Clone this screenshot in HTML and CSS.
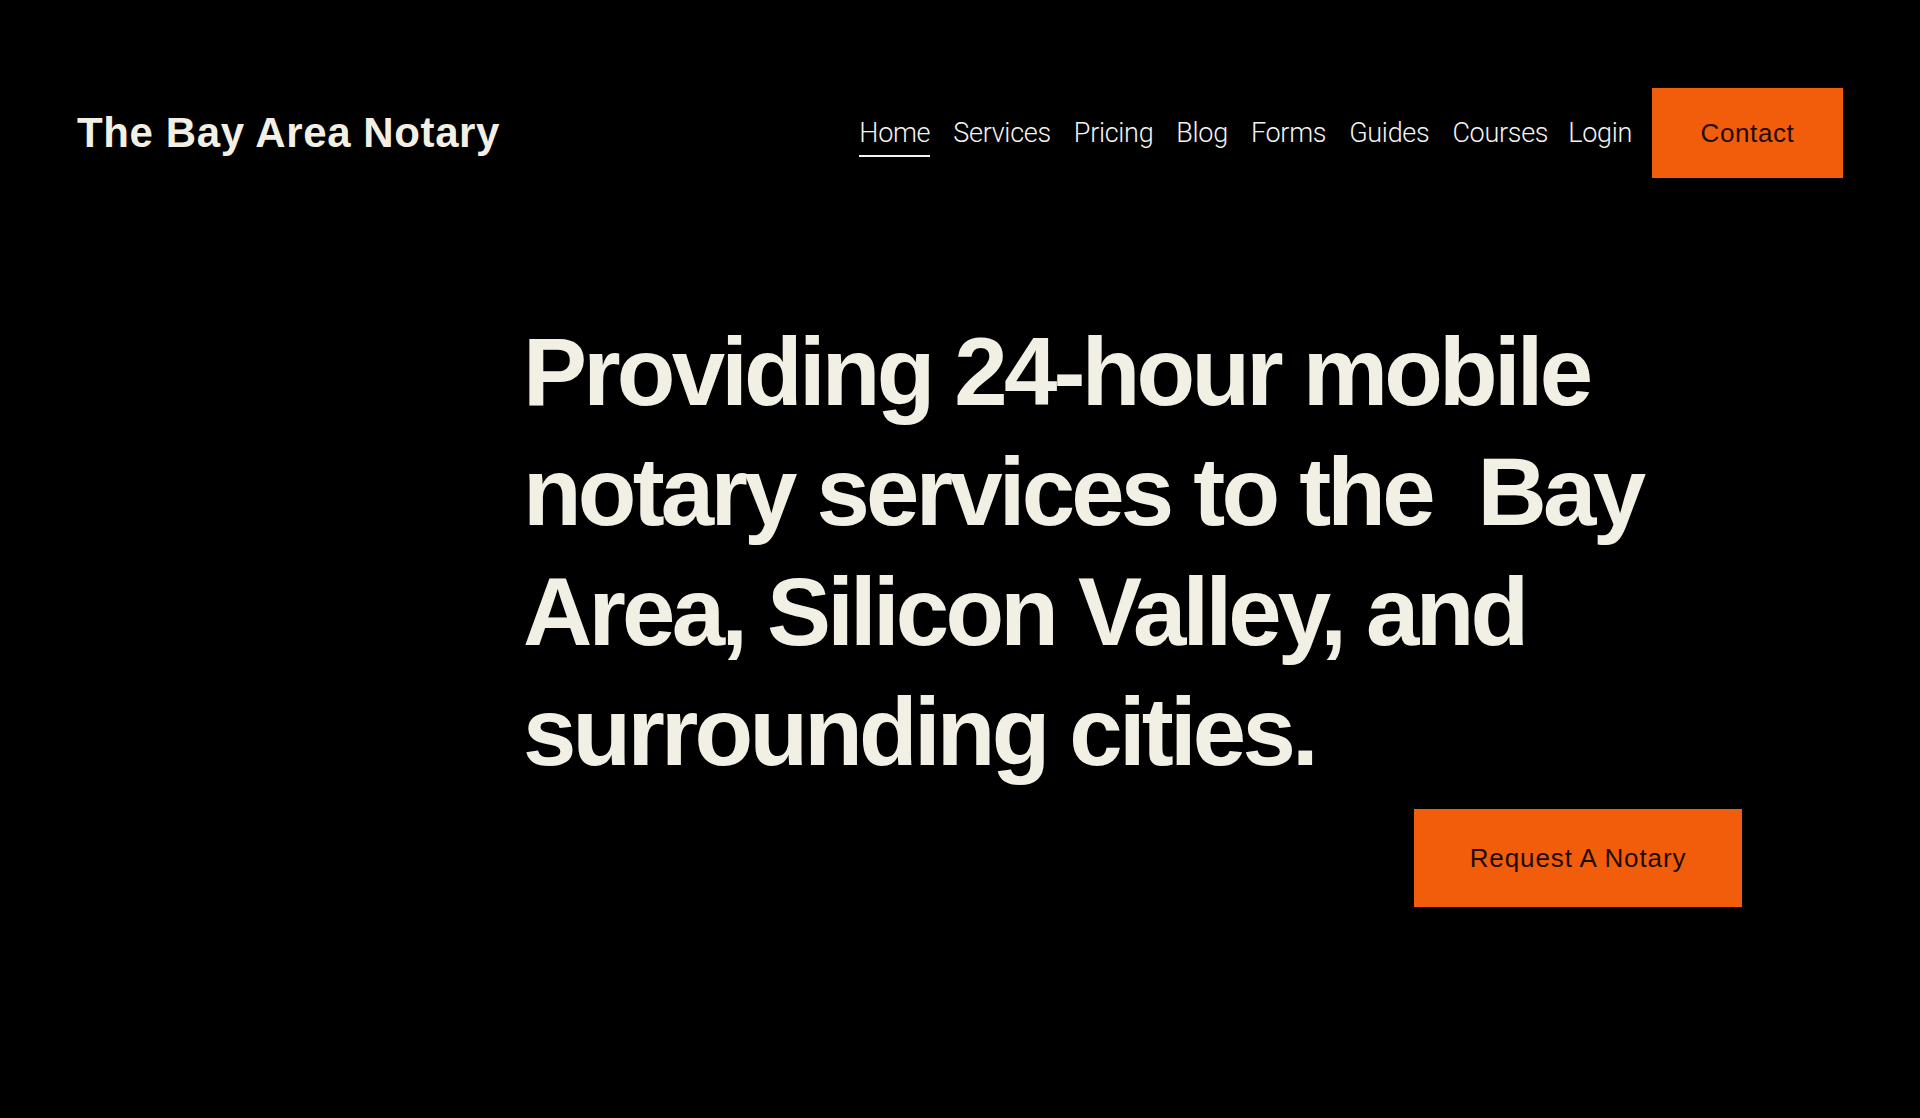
FILE: index.html
```html
<!DOCTYPE html>
<html lang="en">
<head>
<meta charset="utf-8">
<title>The Bay Area Notary</title>
<link rel="stylesheet" href="styles.css">
</head>
<body>
<header class="site-header">
  <a class="logo" href="#">The Bay Area Notary</a>
  <nav class="nav">
    <ul class="nav-list">
      <li><a class="nav-link active" href="#">Home</a></li>
      <li><a class="nav-link" href="#">Services</a></li>
      <li><a class="nav-link" href="#">Pricing</a></li>
      <li><a class="nav-link" href="#">Blog</a></li>
      <li><a class="nav-link" href="#">Forms</a></li>
      <li><a class="nav-link" href="#">Guides</a></li>
      <li><a class="nav-link" href="#">Courses</a></li>
    </ul>
    <div class="nav-actions">
      <a class="nav-link" href="#">Login</a>
      <a class="btn btn-contact" href="#">Contact</a>
    </div>
  </nav>
</header>
<main class="hero">
  <h1 class="hero-title">Providing 24-hour mobile<br>notary services to the&nbsp; Bay<br>Area, Silicon Valley, and<br>surrounding cities.</h1>
  <a class="btn btn-request" href="#">Request A Notary</a>
</main>
</body>
</html>
```
FILE: styles.css
```css
* { box-sizing: border-box; }
html, body { margin: 0; padding: 0; }
body {
  background: #000;
  min-height: 1118px;
  font-family: "Liberation Sans", Arial, sans-serif;
  color: #f2f0e4;
}
a { text-decoration: none; color: inherit; }

.site-header {
  display: flex;
  justify-content: space-between;
  align-items: center;
  padding: 88px 77px 0 77px;
}
.logo {
  font-family: "Liberation Sans", Arial, sans-serif;
  font-weight: 700;
  font-size: 42px;
  letter-spacing: 0.6px;
  color: #f2f0e4;
  line-height: 1;
}
.nav {
  display: flex;
  align-items: center;
  gap: 20px;
}
.nav-list {
  list-style: none;
  margin: 0;
  padding: 0;
  display: flex;
  gap: 23px;
}
.nav-actions {
  display: flex;
  align-items: center;
  gap: 20px;
}
.nav-link {
  position: relative;
  font-family: Roboto, "Liberation Sans", sans-serif;
  font-weight: 300;
  font-size: 27px;
  color: #f4f4f4;
  line-height: 1;
  letter-spacing: -0.3px;
}
.nav-link.active::after {
  content: "";
  position: absolute;
  left: 0;
  right: 0;
  bottom: -8px;
  height: 2px;
  background: #f4f4f4;
}
.btn {
  display: flex;
  align-items: center;
  justify-content: center;
  background: #f15d0b;
  color: #1e0c04;
  font-family: "Liberation Sans", Arial, sans-serif;
  font-size: 26px;
  letter-spacing: 0.6px;
}
.btn-contact {
  height: 90px;
  width: 191px;
}
.hero {
  display: flex;
  flex-direction: column;
  margin: 134px 0 0 523px;
  width: 1219px;
}
.hero-title {
  margin: 0;
  font-family: "Liberation Sans", Arial, sans-serif;
  font-weight: 700;
  font-size: 96px;
  line-height: 120px;
  letter-spacing: -3.8px;
  color: #f2f0e4;
}
.btn-request {
  align-self: flex-end;
  margin-top: 17px;
  width: 328px;
  height: 98px;
  letter-spacing: 0.9px;
}
```
